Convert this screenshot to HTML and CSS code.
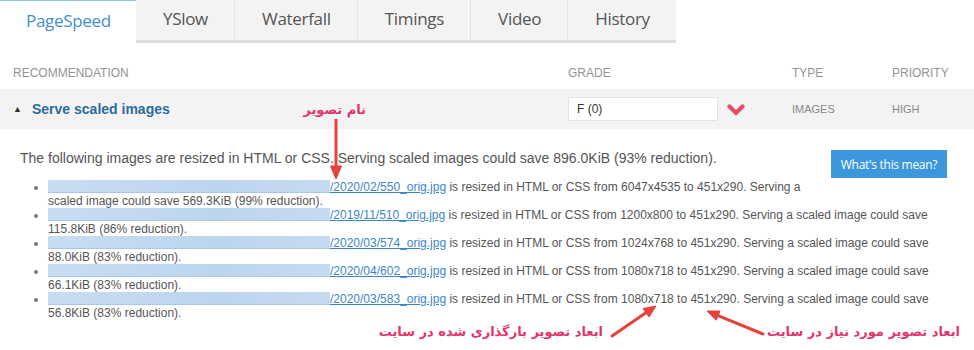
FILE: index.html
```html
<!DOCTYPE html>
<html lang="en">
<head>
<meta charset="utf-8">
<title>PageSpeed</title>
<link rel="stylesheet" href="styles.css">
</head>
<body>
<div class="page">
  <nav class="tabs">
    <a class="tab active">PageSpeed</a>
    <a class="tab">YSlow</a>
    <a class="tab">Waterfall</a>
    <a class="tab">Timings</a>
    <a class="tab">Video</a>
    <a class="tab">History</a>
  </nav>

  <div class="thead grid">
    <span>RECOMMENDATION</span>
    <span>GRADE</span>
    <span>TYPE</span>
    <span>PRIORITY</span>
  </div>

  <div class="row grid">
    <span class="rec"><span class="caret">&#9650;</span><a class="title">Serve scaled images</a></span>
    <span class="grade">
      <span class="gradebox">F (0)</span>
      <svg class="chev" width="18" height="12" viewBox="0 0 18 12"><polyline points="2.5,2.5 9,9 15.5,2.5" fill="none" stroke="#e2515f" stroke-width="4.2" stroke-linecap="round" stroke-linejoin="round"/></svg>
    </span>
    <span class="val">IMAGES</span>
    <span class="val">HIGH</span>
  </div>

  <div class="details">
    <div class="intro">
      <p class="lead">The following images are resized in HTML or CSS. Serving scaled images could save 896.0KiB (93% reduction).</p>
      <a class="btn">What's this mean?</a>
    </div>
    <ul class="list">
      <li><span class="blur"></span><a class="link">/2020/02/550_orig.jpg</a> is resized in HTML or CSS from 6047x4535 to 451x290. Serving a<br>scaled image could save 569.3KiB (99% reduction).</li>
      <li><span class="blur"></span><a class="link">/2019/11/510_orig.jpg</a> is resized in HTML or CSS from 1200x800 to 451x290. Serving a scaled image could save<br>115.8KiB (86% reduction).</li>
      <li><span class="blur"></span><a class="link">/2020/03/574_orig.jpg</a> is resized in HTML or CSS from 1024x768 to 451x290. Serving a scaled image could save<br>88.0KiB (83% reduction).</li>
      <li><span class="blur"></span><a class="link">/2020/04/602_orig.jpg</a> is resized in HTML or CSS from 1080x718 to 451x290. Serving a scaled image could save<br>66.1KiB (83% reduction).</li>
      <li><span class="blur"></span><a class="link">/2020/03/583_orig.jpg</a> is resized in HTML or CSS from 1080x718 to 451x290. Serving a scaled image could save<br>56.8KiB (83% reduction).</li>
    </ul>
  </div>

  <span class="note note-name" dir="rtl">نام تصویر</span>
  <span class="note note-uploaded" dir="rtl">ابعاد تصویر بارگذاری شده در سایت</span>
  <span class="note note-needed" dir="rtl">ابعاد تصویر مورد نیاز در سایت</span>

  <svg class="arrows" width="974" height="350" viewBox="0 0 974 350">
    <g fill="#e8413b" stroke="#e8413b">
      <line x1="336" y1="119" x2="336" y2="168" stroke-width="3"/>
      <polygon points="330.5,166 341.5,166 336,179" stroke-width="1"/>
      <line x1="612" y1="336" x2="647" y2="312" stroke-width="3" stroke-linecap="round"/>
      <polygon points="649,317 643,308.6 656,306" stroke-width="1"/>
      <line x1="763" y1="334" x2="718" y2="315.6" stroke-width="3" stroke-linecap="round"/>
      <polygon points="720,311 716.2,320.2 707,311" stroke-width="1"/>
    </g>
  </svg>
</div>
</body>
</html>
```

FILE: styles.css
```css
* { box-sizing: border-box; }

html, body {
  margin: 0;
  padding: 0;
  background: #ffffff;
}

.page {
  position: relative;
  width: 974px;
  height: 350px;
  overflow: hidden;
  font-family: "Liberation Sans", Arial, sans-serif;
  color: #555555;
}

/* tabs */
.tabs {
  display: flex;
  height: 43px;
}

.tab {
  display: flex;
  align-items: center;
  justify-content: center;
  height: 43px;
  padding: 0 26px 3px 27px;
  background: #f3f3f3;
  border-right: 1px solid #e4e4e4;
  border-bottom: 3px solid #dedede;
  font-family: "Open Sans", sans-serif;
  font-size: 17px;
  letter-spacing: -0.3px;
  color: #555555;
}

.tab:last-child { border-right: none; }

.tab.active {
  background: #ffffff;
  color: #3f8fd2;
  border-top: 1px solid #8fc0e8;
  border-bottom: 3px solid #ffffff;
  border-right: none;
  padding: 0 25px 0 26px;
}

/* table grid */
.grid {
  display: grid;
  grid-template-columns: 555px 224px 100px 1fr;
  padding-left: 13px;
}

.thead {
  padding-top: 23px;
  padding-bottom: 9px;
  font-size: 12px;
  line-height: 14px;
  color: #939393;
}

.row {
  height: 40px;
  align-items: center;
  background: #f3f3f3;
}

.rec {
  display: flex;
  align-items: center;
}

.caret {
  font-size: 9px;
  color: #333333;
  margin-left: 0;
  width: 19px;
}

.title {
  font-size: 14px;
  font-weight: bold;
  color: #2b6b9f;
}

.grade {
  display: flex;
  align-items: center;
}

.gradebox {
  display: flex;
  align-items: center;
  width: 150px;
  height: 24px;
  padding-left: 8px;
  background: #ffffff;
  border: 1px solid #e3e3e3;
  font-size: 12px;
  color: #333333;
}

.chev {
  margin-left: 9px;
  margin-top: 1px;
}

.val {
  font-size: 11px;
  color: #888888;
}

/* details */
.details {
  padding-left: 20px;
}

.intro {
  display: flex;
  justify-content: space-between;
  align-items: flex-start;
  padding-top: 21px;
  padding-right: 27px;
}

.lead {
  margin: 0;
  font-size: 14px;
  line-height: 16px;
  color: #555555;
}

.btn {
  display: flex;
  align-items: center;
  justify-content: center;
  width: 116px;
  height: 28px;
  background: #3c97dc;
  color: #ffffff;
  font-family: "Open Sans", sans-serif;
  font-size: 12px;
  letter-spacing: -0.3px;
}

.list {
  margin: 2px 0 0;
  padding-left: 28px;
  font-size: 12px;
  line-height: 14px;
  color: #555555;
}

.list li::marker {
  color: #777777;
}

.blur {
  display: inline-block;
  width: 282px;
  height: 13px;
  vertical-align: -2px;
  background: linear-gradient(90deg, #c9ddf2, #bcd5ef 60%, #c6dbf1);
  border-bottom: 1px solid #a9c7e8;
}

.link {
  color: #3a86c8;
  text-decoration: underline;
}

/* annotations */
.note {
  position: absolute;
  font-family: "DejaVu Sans", sans-serif;
  font-weight: bold;
  font-size: 13px;
  line-height: 18px;
  color: #e5336c;
  white-space: nowrap;
}

.note-name { right: 608px; top: 101px; }
.note-uploaded { right: 371px; top: 323px; }
.note-needed { right: 14px; top: 323px; }

.arrows {
  position: absolute;
  left: 0;
  top: 0;
  pointer-events: none;
}
```
